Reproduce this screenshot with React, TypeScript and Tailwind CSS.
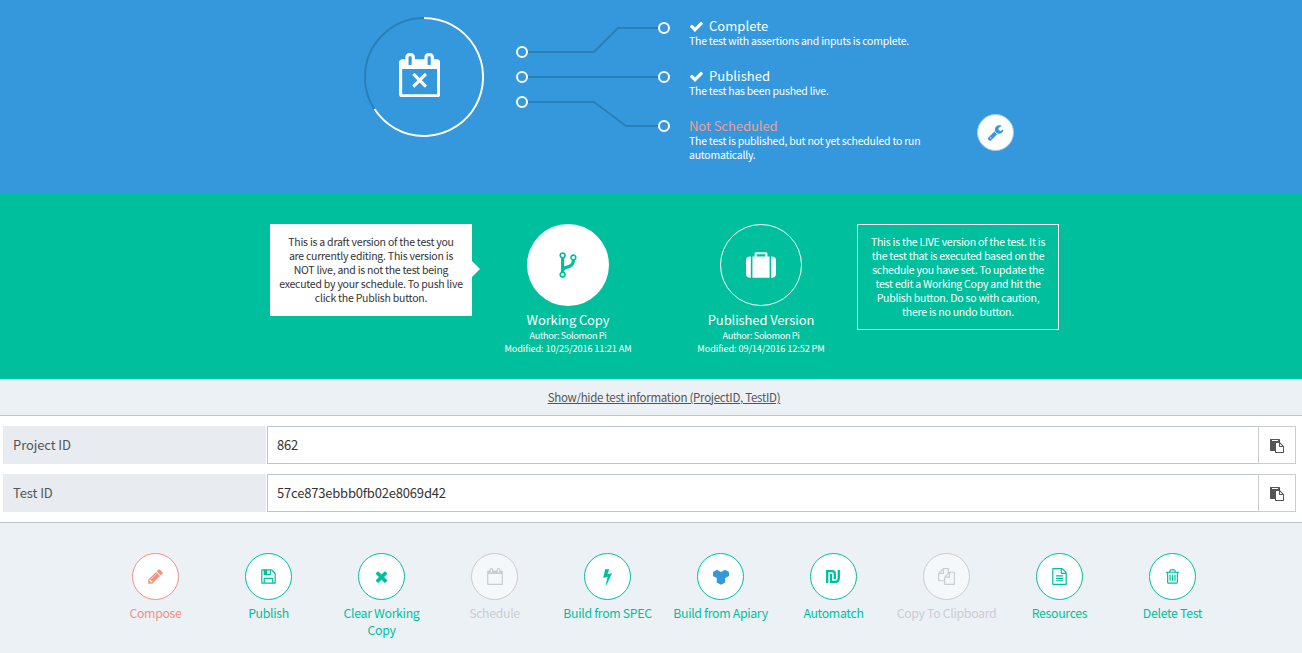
import type { ReactNode } from "react";

const CAL_BODY =
  "m-983 333h1408v-1024h-1408v1024zm384-1216v-288q0-14-9-23t-23-9h-64q-14 0-23 9t-9 23v288q0 14 9 23t23 9h64q14 0 23-9t9-23zm768 0v-288q0-14-9-23t-23-9h-64q-14 0-23 9t-9 23v288q0 14 9 23t23 9h64q14 0 23-9t9-23zm384-64v1280q0 52-38 90t-90 38h-1408q-52 0-90-38t-38-90v-1280q0-52 38-90t90-38h128v-96q0-66 47-113t113-47h64q66 0 113 47t47 113v96h384v-96q0-66 47-113t113-47h64q66 0 113 47t47 113v96h128q52 0 90 38t38 90z";

const paths = {
  calendarTimes:
    "M1111 1331l-46 46q-9 9-22 9t-23-9l-188-189-188 189q-10 9-23 9t-22-9l-46-46q-9-9-9-22t9-23l189-188-189-188q-9-10-9-23t9-22l46-46q9-9 22-9t23 9l188 188 188-188q10-9 23-9t22 9l46 46q9 9 9 22t-9 23l-188 188 188 188q9 10 9 23t-9 22z" + CAL_BODY,
  calendar: "M1111 1331" + CAL_BODY,
  check:
    "M1671 566q0 40-28 68l-724 724-136 136q-28 28-68 28t-68-28l-136-136-362-362q-28-28-28-68t28-68l136-136q28-28 68-28t68 28l294 295 656-657q28-28 68-28t68 28l136 136q28 28 28 68z",
  times:
    "M1490 1322q0 40-28 68l-136 136q-28 28-68 28t-68-28l-294-294-294 294q-28 28-68 28t-68-28l-136-136q-28-28-28-68t28-68l294-294-294-294q-28-28-28-68t28-68l136-136q28-28 68-28t68 28l294 294 294-294q28-28 68-28t68 28l136 136q28 28 28 68t-28 68l-294 294 294 294q28 28 28 68z",
  wrench:
    "M448 1472q0-26-19-45t-45-19-45 19-19 45 19 45 45 19 45-19 19-45zm644-420l-682 682q-37 37-90 37-52 0-91-37l-106-108q-38-36-38-90 0-53 38-91l681-681q39 98 114.500 173.500t173.500 114.500zm634-435q0 39-23 106-47 134-164.500 217.500t-258.500 83.500q-185 0-316.500-131.500t-131.500-316.500 131.500-316.500 316.500-131.500q58 0 121.500 16.500t107.500 46.500q16 11 16 28t-16 28l-293 169v224l193 107q5-3 79-48.500t135.500-81 70.500-35.500q15 0 23.500 10t8.500 25z",
  fork:
    "M672 1472q0-40-28-68t-68-28-68 28-28 68 28 68 68 28 68-28 28-68zm0-1152q0-40-28-68t-68-28-68 28-28 68 28 68 68 28 68-28 28-68zm640 128q0-40-28-68t-68-28-68 28-28 68 28 68 68 28 68-28 28-68zm96 0q0 52-26 96.500t-70 69.500q-2 287-226 414-67 38-203 81-128 40-169.500 71t-41.500 100v26q44 25 70 69.500t26 96.500q0 80-56 136t-136 56-136-56-56-136q0-52 26-96.500t70-69.500v-820q-44-25-70-69.500t-26-96.500q0-80 56-136t136-56 136 56 56 136q0 52-26 96.500t-70 69.500v497q54-26 154-57 55-17 87.500-29.500t70.500-31 59-39.500 40.500-51 28-69.500 8.500-91.500q-44-25-70-69.500t-26-96.500q0-80 56-136t136-56 136 56 56 136z",
  suitcase:
    "M640 384h512v-128h-512v128zm-352 0v1280h-64q-92 0-158-66t-66-158v-832q0-92 66-158t158-66h64zm1120 0v1280h-1024v-1280h128v-160q0-40 28-68t68-28h576q40 0 68 28t28 68v160h128zm384 224v832q0 92-66 158t-158 66h-64v-1280h64q92 0 158 66t66 158z",
  paste:
    "M768 1664h896v-640h-416q-40 0-68-28t-28-68v-416h-384v1152zm256-1440v-64q0-13-9.500-22.500t-22.500-9.500h-704q-13 0-22.500 9.500t-9.500 22.500v64q0 13 9.500 22.500t22.500 9.500h704q13 0 22.500-9.500t9.500-22.500zm256 672h299l-299-299v299zm512 128v672q0 40-28 68t-68 28h-960q-40 0-68-28t-28-68v-160h-544q-40 0-68-28t-28-68v-1344q0-40 28-68t68-28h1088q40 0 68 28t28 68v328q21 13 36 28l408 408q28 28 48 76t20 88z",
  pencil:
    "M491 1536l91-91-235-235-91 91v107h128v128h107zm523-928q0-22-22-22-10 0-17 7l-542 542q-7 7-7 17 0 22 22 22 10 0 17-7l542-542q7-7 7-17zm-54-192l416 416-832 832h-416v-416zm683 96q0 53-37 90l-166 166-416-416 166-165q36-38 90-38 53 0 91 38l235 234q37 39 37 91z",
  floppy:
    "M512 1536h768v-384h-768v384zm896 0h128v-896q0-14-10-38.500t-20-34.500l-281-281q-10-10-34-20t-39-10v416q0 40-28 68t-68 28h-576q-40 0-68-28t-28-68v-416h-128v1280h128v-416q0-40 28-68t68-28h832q40 0 68 28t28 68v416zm-384-928v-320q0-13-9.500-22.500t-22.500-9.500h-192q-13 0-22.500 9.500t-9.500 22.500v320q0 13 9.500 22.500t22.500 9.500h192q13 0 22.500-9.500t9.500-22.500zm640 32v928q0 40-28 68t-68 28h-1344q-40 0-68-28t-28-68v-1344q0-40 28-68t68-28h928q40 0 88 20t76 48l280 280q28 28 48 76t20 88z",
  bolt:
    "M1333 566q18 20 7 44l-540 1157q-13 25-42 25-4 0-14-2-17-5-25.500-19t-4.500-30l197-808-406 101q-4 1-12 1-18 0-31-11-18-15-13-39l201-825q4-14 16-23t28-9h328q19 0 32 12.500t13 29.500q0 8-5 18l-171 463 396-98q8-2 12-2 19 0 34 15z",
  files:
    "M1696 384q40 0 68 28t28 68v1216q0 40-28 68t-68 28h-960q-40 0-68-28t-28-68v-288h-544q-40 0-68-28t-28-68v-672q0-40 20-88t48-76l408-408q28-28 76-48t88-20h416q40 0 68 28t28 68v328q68-40 128-40h416zm-544 213l-299 299h299v-299zm-640-384l-299 299h299v-299zm196 647l316-316v-416h-384v416q0 40-28 68t-68 28h-416v640h512v-256q0-40 20-88t48-76zm956 804v-1152h-384v416q0 40-28 68t-68 28h-416v640h896z",
  fileText:
    "M1596 380q28 28 48 76t20 88v1152q0 40-28 68t-68 28h-1344q-40 0-68-28t-28-68v-1600q0-40 28-68t68-28h896q40 0 88 20t76 48zm-444-244v376h376q-10-29-22-41l-313-313q-12-12-41-22zm384 1528v-1024h-416q-40 0-68-28t-28-68v-416h-768v1536h1280zm-1024-864q0-14 9-23t23-9h704q14 0 23 9t9 23v64q0 14-9 23t-23 9h-704q-14 0-23-9t-9-23v-64zm736 224q14 0 23 9t9 23v64q0 14-9 23t-23 9h-704q-14 0-23-9t-9-23v-64q0-14 9-23t23-9h704zm0 256q14 0 23 9t9 23v64q0 14-9 23t-23 9h-704q-14 0-23-9t-9-23v-64q0-14 9-23t23-9h704z",
  trash:
    "M704 736v576q0 14-9 23t-23 9h-64q-14 0-23-9t-9-23v-576q0-14 9-23t23-9h64q14 0 23 9t9 23zm256 0v576q0 14-9 23t-23 9h-64q-14 0-23-9t-9-23v-576q0-14 9-23t23-9h64q14 0 23 9t9 23zm256 0v576q0 14-9 23t-23 9h-64q-14 0-23-9t-9-23v-576q0-14 9-23t23-9h64q14 0 23 9t9 23zm128 724v-948h-896v948q0 22 7 40.500t14.500 27 10.500 8.500h832q3 0 10.500-8.500t14.500-27 7-40.500zm-672-1076h448l-48-117q-7-9-17-11h-317q-10 2-17 11zm928 32v64q0 14-9 23t-23 9h-96v948q0 83-47 143.500t-113 60.500h-832q-66 0-113-58.500t-47-141.500v-952h-96q-14 0-23-9t-9-23v-64q0-14 9-23t23-9h309l70-167q15-37 54-63t79-26h320q40 0 79 26t54 63l70 167h309q14 0 23 9t9 23z",
};

function Icon({ name, className }: { name: keyof typeof paths; className: string }) {
  return (
    <svg viewBox="0 0 1792 1792" fill="currentColor" className={className}>
      <path d={paths[name]} />
    </svg>
  );
}

function Shekel() {
  return (
    <svg viewBox="0 0 14 13" className="mr-[2px] h-[13px] w-[14px]" fill="none" stroke="currentColor" strokeWidth="2.300">
      <path d="M1.200 13V1.200h5Q8.800 1.200 8.800 3.800V9" />
      <path d="M5 4v7.800h4Q12.800 11.800 12.800 8V0" />
    </svg>
  );
}

function Apiary() {
  return (
    <svg viewBox="0 0 16 16" className="h-4 w-4" fill="#3498db">
      <path d="M0 3 4 .8 8 3 12 .8 16 3v4l-3.800 2v4.500L8 15.800l-4.200-2.300V9L0 7z" />
    </svg>
  );
}

function Status({ title, text, done }: { title: string; text: ReactNode; done?: boolean }) {
  return (
    <div className="h-[50px]">
      <div
        className={
          done
            ? "flex h-4 items-center text-[13px] leading-4 tracking-[0.050px]"
            : "flex h-4 items-center text-[13px] leading-4 tracking-[-0.050px] text-[#f29b8e]"
        }
      >
        {done && <Icon name="check" className="mr-[5px] h-[15px] w-[15px]" />}
        {title}
      </div>
      <p className="text-[10.500px] leading-[14px] tracking-[-0.240px] whitespace-nowrap">{text}</p>
    </div>
  );
}

function Version({ title, modified, children }: { title: string; modified: string; children: ReactNode }) {
  return (
    <div className="flex w-[192px] flex-col items-center text-white">
      {children}
      <div className="mt-[5px] text-[13px] leading-[18px] tracking-[-0.120px]">{title}</div>
      <div className="text-[9.200px] leading-[13px] tracking-[-0.360px]">Author: Solomon Pi</div>
      <div className="text-[9.200px] leading-[13px] tracking-[-0.110px]">{modified}</div>
    </div>
  );
}

function Field({ label, value }: { label: string; value: string }) {
  return (
    <div className="flex h-[38px] text-[13px] leading-[38px] tracking-[-0.100px]">
      <div className="mr-px w-[263px] bg-[#e8ecf1] pl-[10px] text-[#555]">{label}</div>
      <div className="w-[991px] border border-r-0 border-[#b8c7ce] pl-[9px] leading-9 tracking-[-0.190px] text-[#333]">
        {value}
      </div>
      <button className="flex w-[38px] items-center justify-center border border-[#ccc] text-[#555]">
        <Icon name="paste" className="mt-[2px] h-[14px] w-[14px]" />
      </button>
    </div>
  );
}

const tones = {
  green: "flex w-[113px] flex-col items-center text-[#00bf9c]",
  coral: "flex w-[113px] flex-col items-center text-[#f4907f]",
  muted: "flex w-[113px] flex-col items-center text-[#aaa] opacity-50",
};

function Action({ label, tone = "green", children }: { label: string; tone?: keyof typeof tones; children: ReactNode }) {
  return (
    <div className={tones[tone]}>
      <div className="flex h-[47px] w-[47px] items-center justify-center rounded-full border border-current bg-white">
        {children}
      </div>
      <div className="mt-[5px] max-w-[103px] text-center text-[12.300px] leading-[17px] tracking-[-0.320px]">{label}</div>
    </div>
  );
}

const glyph = "h-[17px] w-[17px]";

export default function App() {
  return (
    <div className="h-[653px] w-[1302px] overflow-hidden bg-[#ecf1f6] font-['Noto_Sans_CJK_SC','Source_Sans_Pro',sans-serif]">
      <section className="flex h-[193px] bg-[#3598dc] pl-[364px] text-white">
        <div className="mt-[17px] grid h-[120px] w-[120px] place-items-center">
          <svg viewBox="0 0 120 120" className="col-start-1 row-start-1 h-[120px] w-[120px]" fill="none" strokeWidth="2">
            <circle cx="60" cy="60" r="59" stroke="#2980b9" />
            <path d="M60 1A59 59 0 1 1 10.500 92" stroke="#fff" />
          </svg>
          <svg
            viewBox="0 0 1664 1792"
            fill="currentColor"
            className="col-start-1 row-start-1 mr-[9px] mb-[4px] h-[44.500px] w-[41.300px]"
          >
            <path d={paths.calendarTimes} />
          </svg>
        </div>
        <svg viewBox="0 0 160 120" className="mt-[16px] ml-[30px] h-[120px] w-[160px]" fill="none" strokeWidth="2">
          <g stroke="#2980b9">
            <path d="M14 36H80L104 12H144" />
            <path d="M14 61H144" />
            <path d="M14 86H80L112 110H144" />
          </g>
          <g stroke="#fff">
            <circle cx="8" cy="36" r="5" />
            <circle cx="8" cy="61" r="5" />
            <circle cx="8" cy="86" r="5" />
            <circle cx="150" cy="12" r="5" />
            <circle cx="150" cy="61" r="5" />
            <circle cx="150" cy="110" r="5" />
          </g>
        </svg>
        <div className="mt-[18px] ml-[15px] w-[250px]">
          <Status done title="Complete" text="The test with assertions and inputs is complete." />
          <Status done title="Published" text="The test has been pushed live." />
          <Status
            title="Not Scheduled"
            text={
              <>
                The test is published, but not yet scheduled to run
                <br />
                automatically.
              </>
            }
          />
        </div>
        <button className="mt-[114px] ml-[38px] flex h-[37px] w-[37px] items-center justify-center rounded-full border border-[#9accee] bg-white text-[#3598dc]">
          <Icon name="wrench" className="h-[17px] w-[17px]" />
        </button>
      </section>

      <section className="flex h-[186px] items-start bg-[#00bf9c] pt-[31px] pl-[270px] text-[10.500px] leading-[14px] tracking-[-0.240px] whitespace-nowrap">
        <div className="relative h-[92px] w-[202px] bg-white pt-[11px] text-center text-[#333]">
          This is a draft version of the test you
          <br />
          are currently editing. This version is
          <br />
          NOT live, and is not the test being
          <br />
          executed by your schedule. To push live
          <br />
          click the Publish button.
          <span className="absolute top-[37px] left-[202px] border-y-8 border-l-8 border-y-transparent border-l-white" />
        </div>
        <Version title="Working Copy" modified="Modified: 10/25/2016 11:21 AM">
          <div className="flex h-[82px] w-[82px] items-center justify-center rounded-full bg-white text-[#00bf9c]">
            <Icon name="fork" className="h-[30px] w-[30px]" />
          </div>
        </Version>
        <div className="w-px" />
        <Version title="Published Version" modified="Modified: 09/14/2016 12:52 PM">
          <div className="flex h-[82px] w-[82px] items-center justify-center rounded-full border border-white">
            <Icon name="suitcase" className="h-[30px] w-[30px]" />
          </div>
        </Version>
        <div className="h-[106px] w-[202px] border border-white pt-[10px] text-center text-white">
          This is the LIVE version of the test. It is
          <br />
          the test that is executed based on the
          <br />
          schedule you have set. To update the
          <br />
          test edit a Working Copy and hit the
          <br />
          Publish button. Do so with caution,
          <br />
          there is no undo button.
        </div>
      </section>

      <div className="h-[37px] border-b border-[#b8c7ce] pl-[26px] text-center text-[11.500px] leading-9 tracking-[-0.280px] text-[#555]">
        <a className="underline">Show/hide test information (ProjectID, TestID)</a>
      </div>

      <section className="flex h-[107px] flex-col gap-[10px] border-b border-[#b8c7ce] bg-white pt-[10px] pl-[3px]">
        <Field label="Project ID" value="862" />
        <Field label="Test ID" value="57ce873ebbb0fb02e8069d42" />
      </section>

      <section className="flex pt-[30px] pl-[99px]">
        <Action label="Compose" tone="coral">
          <Icon name="pencil" className={glyph} />
        </Action>
        <Action label="Publish">
          <Icon name="floppy" className={glyph} />
        </Action>
        <Action label="Clear Working Copy">
          <Icon name="times" className={glyph} />
        </Action>
        <Action label="Schedule" tone="muted">
          <svg viewBox="0 0 1664 1792" fill="currentColor" className="h-[17px] w-[16px]">
            <path d={paths.calendar} />
          </svg>
        </Action>
        <Action label="Build from SPEC">
          <Icon name="bolt" className={glyph} />
        </Action>
        <Action label="Build from Apiary">
          <Apiary />
        </Action>
        <Action label="Automatch">
          <Shekel />
        </Action>
        <Action label="Copy To Clipboard" tone="muted">
          <Icon name="files" className={glyph} />
        </Action>
        <Action label="Resources">
          <Icon name="fileText" className={glyph} />
        </Action>
        <Action label="Delete Test">
          <Icon name="trash" className={glyph} />
        </Action>
      </section>
    </div>
  );
}
